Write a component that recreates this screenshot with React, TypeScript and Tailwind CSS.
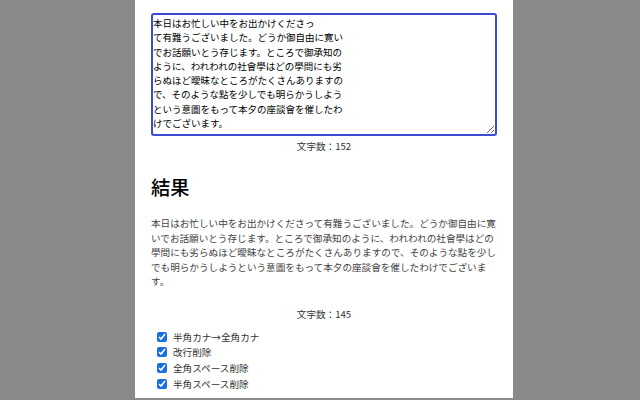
import React from "react"

const source =
    "本日はお忙しい中をお出かけくださっ\nて有難うございました。どうか御自由に寛い\nでお話願いとう存じます。ところで御承知の\nように、われわれの社會學はどの學問にも劣\nらぬほど曖昧なところがたくさんありますの\nで、そのような點を少しでも明らかうしよう\nという意圖をもって本夕の座談會を催したわ\nけでございます。"

const result =
    "本日はお忙しい中をお出かけくださって有難うございました。どうか御自由に寛いでお話願いとう存じます。ところで御承知のように、われわれの社會學はどの學問にも劣らぬほど曖昧なところがたくさんありますので、そのような點を少しでも明らかうしようという意圖をもって本夕の座談會を催したわけでございます。"

const options = ["半角カナ→全角カナ", "改行削除", "全角スペース削除", "半角スペース削除"]

export default function App() {
    return (
        <div className="h-[400px] overflow-hidden bg-[#8a8a8a] font-['Noto_Sans_CJK_JP','Noto_Sans',sans-serif]">
            <div className="ml-[135px] flex h-[398px] w-[378px] flex-col bg-white px-[16px] pt-[13px]">
                {/* Input */}
                <textarea
                    defaultValue={source}
                    className="h-[123px] w-full resize-y overflow-hidden rounded-[3px] border-2 border-[#3b4bd4] px-0 pt-[1px] pb-0 text-[9.5px] leading-[14.3px] text-black outline-none"
                />
                <p className="mt-[4px] text-center text-[9.6px] leading-[12px] text-[#333]">文字数：152</p>

                {/* Result */}
                <h2 className="mt-[24px] text-[19.2px] leading-[23px] font-medium text-black">結果</h2>
                <p className="mt-[17px] text-[9.6px] leading-[14.5px] text-[#444]">{result}</p>
                <p className="mt-[18px] text-center text-[9.6px] leading-[14.4px] text-[#333]">文字数：145</p>

                {/* Options */}
                <div className="mt-[8px] flex flex-col">
                    {options.map((label) => (
                        <label key={label} className="flex h-[15.7px] items-center text-[9.6px] text-[#333]">
                            <input
                                type="checkbox"
                                defaultChecked
                                className="m-0 ml-[6px] mr-[6px] h-[10px] w-[10px] accent-[#1a6fe0]"
                            />
                            {label}
                        </label>
                    ))}
                </div>
            </div>
        </div>
    )
}
